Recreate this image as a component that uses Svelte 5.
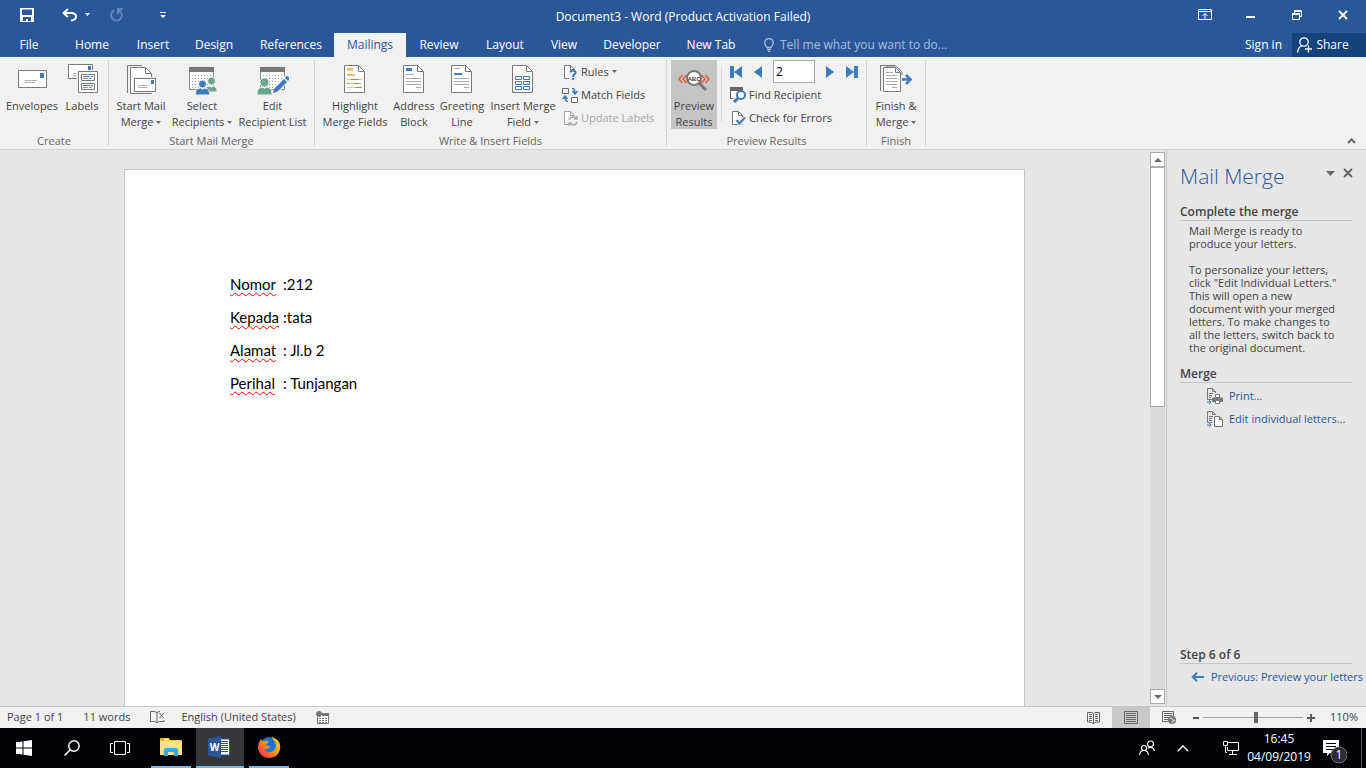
<script>
  const tabs = [
    { name: "File", width: 58 },
    { name: "Home", width: 68 },
    { name: "Insert", width: 54 },
    { name: "Design", width: 68 },
    { name: "References", width: 86 },
    { name: "Mailings", width: 72 },
    { name: "Review", width: 66 },
    { name: "Layout", width: 66 },
    { name: "View", width: 52 },
    { name: "Developer", width: 84 },
    { name: "New Tab", width: 74 },
  ];
  const letter = [
    ["Nomor", ":212"],
    ["Kepada", ":tata"],
    ["Alamat", ": Jl.b 2"],
    ["Perihal", ": Tunjangan"],
  ];
  let active = $state("Mailings");
  let preview = $state(true);
  let record = $state("2");
  let zoom = $state(110);
</script>

{#snippet caret()}
  <svg class="caret" width="5" height="3" viewBox="0 0 5 3"><path d="M0 0h5L2.500 3z" /></svg>
{/snippet}

{#snippet page()}
  <path d="M5.500 1.500h14l6 6v21h-20z" fill="#fff" stroke="#7a7a7a" />
  <path d="M19.500 1.500v6h6" fill="none" stroke="#7a7a7a" />
{/snippet}

{#snippet calendar()}
  <path d="M3.500 4.500h24v21h-24z" fill="#fff" stroke="#8a8a8a" />
  <path d="M3 3h25v5H3z" fill="#777" />
  <path d="M6 11.500h20M6 14.500h20M6 17.500h20M6 20.500h20M6 23.500h20" stroke="#999" stroke-dasharray="1 2" />
{/snippet}

{#snippet smallPage()}
  <path d="M2.500 1.500h6l4 4v9h-10z" fill="#fff" stroke="currentColor" />
  <path d="M8.500 1.500v4h4" fill="none" stroke="currentColor" />
{/snippet}

{#snippet icon(name)}
  <svg class="icon" width="32" height="32" viewBox="0 0 32 32">
    {#if name === "envelope"}
      <path d="M2.500 6.500h28v17h-28z" fill="#fff" stroke="#7a7a7a" />
      <path d="M24 9h4v5h-4z" fill="#3f7abf" />
      <path d="M9 16.500h12M9 18.500h10" stroke="#b0b0b0" />
    {:else if name === "labels"}
      <path d="M2.500.5h24v14h-24z" fill="#fff" stroke="#7a7a7a" />
      <path d="M22 2h3v4h-3z" fill="#3f7abf" />
      <path d="M7 9.500h5M7 11.500h5" stroke="#b0b0b0" />
      <path d="M12 7.500h19.500v21H12z" fill="#fff" stroke="#f0f0f0" stroke-width="3" />
      <path d="M12.500 7.500h19v21h-19z" fill="#fff" stroke="#7a7a7a" />
      <path d="M15.500 10.500h13v6h-13zM15.500 19.500h13v6h-13z" fill="#fff" stroke="#7a7a7a" />
      <path d="M17 12.500h7m1 0h2M17 21.500h7m1 0h2" stroke="#3f7abf" />
      <path d="M17 14.500h5m1 0h3M17 23.500h5m1 0h3" stroke="#999" />
    {:else if name === "start"}
      <path d="M2.500 29V1.500H17" fill="none" stroke="#7a7a7a" />
      <path d="M5.500 29.500v-26h15l6 6v20z" fill="#fff" stroke="#7a7a7a" />
      <path d="M20.500 3.500v6h6" fill="none" stroke="#7a7a7a" />
      <path d="M9.500 14.500h21v13h-21z" fill="#fff" stroke="#f0f0f0" stroke-width="3" />
      <path d="M9.500 14.500h21v13h-21z" fill="#fff" stroke="#7a7a7a" />
      <path d="M26 16h3v4h-3z" fill="#3f7abf" />
      <path d="M13 21.500h10M13 23.500h9" stroke="#b0b0b0" />
    {:else if name === "select"}
      {@render calendar()}
      <path d="M19 28c0-4 1-6 6-6s6 2 6 6z" fill="#6ba58c" stroke="#f0f0f0" />
      <circle cx="25.500" cy="17" r="4" fill="#6ba58c" stroke="#f0f0f0" />
      <path d="M9.500 31c0-5 1-7 7-7s7 2 7 7z" fill="#3f7abf" stroke="#f0f0f0" />
      <circle cx="16.500" cy="20" r="4" fill="#3f7abf" stroke="#f0f0f0" />
      <path d="M15 24l1.500 2 1.500-2zM24 22l1.500 2 1.500-2z" fill="#fff" />
    {:else if name === "edit"}
      {@render calendar()}
      <path d="M0 31c0-5 1-8 7.500-8S15 26 15 31z" fill="#6ba58c" stroke="#f0f0f0" />
      <circle cx="7.500" cy="18.500" r="4.500" fill="#6ba58c" stroke="#f0f0f0" />
      <path d="M6 23l1.500 2L9 23z" fill="#fff" />
      <path d="M19 26L30 14" stroke="#f0f0f0" stroke-width="7" />
      <path d="M16 29l1.500-4.500L27 15l3 3-9.500 9.500zM28 14l1-1.500q1-1 2 0l1 1q1 1 0 2L31 17z" fill="#3f7abf" />
    {:else if name === "highlight"}
      {@render page()}
      <path d="M8 4h6v3H8zM8 10h8v2H8z" fill="#f0c069" />
      <path d="M8 15.500h15M8 19.500h15M8 23.500h15" stroke="#8a8a8a" />
      <path d="M8 15.500h4m7 0h4M10 19.500h5m5 0h3M8 23.500h9" stroke="#f0c069" />
    {:else if name === "address"}
      {@render page()}
      <path d="M8 4h6v3H8z" fill="#3f7abf" />
      <path d="M8 10.500h8M8 14.500h15M8 17.500h15M8 20.500h15M18 23.500h5" stroke="#aaa" />
    {:else if name === "greeting"}
      {@render page()}
      <path d="M8 9h8v2H8z" fill="#3f7abf" />
      <path d="M8 4.500h6M8 14.500h15M8 17.500h15M8 20.500h15M18 23.500h5" stroke="#aaa" />
    {:else if name === "insert"}
      {@render page()}
      <path d="M8.500 12.500h6v3h-6zM16.500 12.500h6v3h-6zM8.500 17.500h6v3h-6zM16.500 17.500h6v3h-6zM8.500 22.500h6v3h-6zM16.500 22.500h6v3h-6z" fill="#fff" stroke="#3f7abf" />
    {:else if name === "preview"}
      <path d="M4.500 11L1 15l3.500 4M8.500 11L5 15l3.500 4M23.500 11l3.500 4-3.500 4M27.500 11l3.500 4-3.500 4" fill="none" stroke="#e2603a" stroke-width="1.500" />
      <circle cx="16" cy="14" r="7" fill="#fff" stroke="#777" stroke-width="2" />
      <path d="M21 19l7 7" stroke="#777" stroke-width="3" />
      <text x="16" y="17" text-anchor="middle" class="abc">ABC</text>
    {:else if name === "finish"}
      <path d="M.5 27V1.500H15" fill="none" stroke="#7a7a7a" />
      <path d="M3.500 27.500v-24h12l5 5v19z" fill="#fff" stroke="#7a7a7a" />
      <path d="M7 3.500V2h9l6 6v3M15.500 3.500v5h5" fill="none" stroke="#7a7a7a" />
      <path d="M6 8.500h7M6 11.500h11M6 14.500h11M6 17.500h11M6 20.500h11M12 23.500h5" stroke="#aaa" />
      <path d="M22 15.500h8M26 11l4.500 4.500L26 20" fill="none" stroke="#3f7abf" stroke-width="2.500" />
    {/if}
  </svg>
{/snippet}

{#snippet small(name)}
  <svg class="small-icon" width="16" height="16" viewBox="0 0 16 16">
    {#if name === "rules"}
      {@render smallPage()}
      <path d="M7 6h9v10H7z" fill="#f0f0f0" />
      <path d="M8.500 8.500c0-3 5.500-2.500 5 .5-.3 1.500-2.500 1.500-2.500 4M11 14v2" fill="none" stroke="#3f7abf" stroke-width="2" />
    {:else if name === "match"}
      <path d="M.5 1.500h6v5h-6zM9.500 10.500h6v5h-6z" fill="#fff" stroke="#6a6a6a" />
      <path d="M10 1.500q3 0 3 5M10.500 4L13 7l2.500-3M6 14.500q-3 0-3-5M.5 12L3 9l2.500 3" fill="none" stroke="#3f7abf" stroke-width="1.500" />
    {:else if name === "update"}
      {@render smallPage()}
      <path d="M6 6h10v10H6z" fill="#f0f0f0" />
      <path d="M7 10q1-3 4-3t4 2m0-3v3h-3M15 12q-1 3-4 3t-4-2m0 3v-3h3" fill="none" stroke="#aaa" stroke-width="1.500" />
    {:else if name === "find"}
      <path d="M.5 1.500h12v10H.5z" fill="#fff" stroke="#6a6a6a" />
      <path d="M0 0h13v4H0z" fill="#666" />
      <path d="M4 14l3.500-3.500" stroke="#f0f0f0" stroke-width="5" />
      <circle cx="11" cy="8" r="4" fill="#fff" stroke="#3f7abf" stroke-width="2" />
      <path d="M4 15l4-4" stroke="#3f7abf" stroke-width="3" />
    {:else if name === "check"}
      {@render smallPage()}
      <path d="M7 11l3 3 5.500-7" fill="none" stroke="#f0f0f0" stroke-width="4" />
      <path d="M6.500 10l3 3.500L15 7.500" fill="none" stroke="#3f7abf" stroke-width="2" />
    {:else if name === "print"}
      <path d="M5 11.500H.5V.5h5l3 3V5M5.500.5v3h3M2 5.500h4M2 7.500h3M2 9.500h2" fill="none" stroke="#777" />
      <path d="M0 14h4M2 12l2 2-2 2" fill="none" stroke="#3f7abf" />
      <path d="M5.500 10h10v3.500h-10z" fill="#777" stroke="#777" />
      <path d="M8.500 6.500h4v3h-4zM8.500 12.500h4v3h-4z" fill="#fff" stroke="#777" />
    {:else if name === "letters"}
      <path d="M5 11.500H.5V.5h5l3 3V4M5.500.5v3h3M2 5.500h4M2 7.500h3M2 9.500h3" fill="none" stroke="#777" />
      <path d="M0 14h4M2 12l2 2-2 2" fill="none" stroke="#3f7abf" />
      <path d="M7.500 5.500h5l3 3v7h-8zM12.500 5.500v3h3" fill="#fff" stroke="#777" />
    {/if}
  </svg>
{/snippet}

{#snippet big(name, first, second, size, drop)}
  <button class="big {size}">
    {@render icon(name)}
    <span>{first}</span>
    {#if second}<span>{second}{#if drop}{@render caret()}{/if}</span>{/if}
  </button>
{/snippet}

<div class="window">
  <header>
    <div class="titlebar">
      <div class="quick">
        <button aria-label="Save">
          <svg width="14" height="14" viewBox="0 0 14 14"><path d="M0 0h14v14H0zM2 1.500V7h10V1.500zM3 9v4h3v-2h2v2h3V9z" fill="#fff" fill-rule="evenodd" /></svg>
        </button>
        <button aria-label="Undo" class="undo">
          <svg width="28" height="14" viewBox="0 0 28 14"><path d="M6 1L1.500 5 6 9M2 5h7q5 0 5 3.500T9 12.500" fill="none" stroke="#fff" stroke-width="2" /><path d="M23 5h5l-2.500 3z" fill="#fff" /></svg>
        </button>
        <button aria-label="Repeat" class="repeat">
          <svg width="14" height="14" viewBox="0 0 14 14"><path d="M4 2.500a5.300 5.300 0 1 0 5 0M8 6V1h5" fill="none" stroke="#6083bb" stroke-width="2" /></svg>
        </button>
        <button aria-label="Customize Quick Access Toolbar">
          <svg width="6" height="6" viewBox="0 0 6 6"><path d="M0 0h6v1H0zM0 3h6L3 6z" fill="#fff" /></svg>
        </button>
      </div>
      <div class="title">Document3 - Word (Product Activation Failed)</div>
      <div class="controls">
        <button aria-label="Ribbon Display Options">
          <svg width="14" height="11" viewBox="0 0 14 11"><path d="M.5.5h13v10H.5zM1 2.500h12M7 10V4.500M4.500 7L7 4.500 9.500 7" fill="none" stroke="#fff" /></svg>
        </button>
        <button aria-label="Minimize">
          <svg width="10" height="10" viewBox="0 0 10 10"><path d="M0 6h9v2H0z" fill="#fff" /></svg>
        </button>
        <button aria-label="Restore">
          <svg width="10" height="10" viewBox="0 0 10 10"><path d="M.5 4h7v5.500h-7zM2.500 3V1h7v5.500H8" fill="none" stroke="#fff" /><path d="M2 0h8v2H2zM0 3h8v2H0z" fill="#fff" /></svg>
        </button>
        <button aria-label="Close">
          <svg width="10" height="10" viewBox="0 0 10 10"><path d="M1 1l8 8M9 1L1 9" stroke="#fff" stroke-width="2" /></svg>
        </button>
      </div>
    </div>
    <nav>
      {#each tabs as tab}
        <button class="tab" class:active={active === tab.name} style="width:{tab.width}px" onclick={() => (active = tab.name)}>{tab.name}</button>
      {/each}
      <label class="tell">
        <svg width="10" height="14" viewBox="0 0 10 14"><path d="M3 9.500Q.7 7 .7 4.800a4.300 4.300 0 0 1 8.600 0Q9.300 7 7 9.500zM3 11.500h4M4 13.300h2" fill="none" stroke="#a9bddc" stroke-width="1.300" /></svg>
        <input placeholder="Tell me what you want to do..." />
      </label>
      <button class="signin">Sign in</button>
      <button class="share">
        <svg width="15" height="16" viewBox="0 0 15 16"><circle cx="7" cy="5" r="4.200" fill="none" stroke="#fff" stroke-width="1.300" /><path d="M.7 15.500q0-5 4-6.500M8 12h7M11.500 8.500v7" fill="none" stroke="#fff" stroke-width="1.300" /></svg>
        Share
      </button>
    </nav>
  </header>

  <div class="ribbon">
    <section class="group">
      <div class="tools">
        {@render big("envelope", "Envelopes", "", "w56")}
        {@render big("labels", "Labels", "", "w44")}
      </div>
      <h2>Create</h2>
    </section>
    <section class="group">
      <div class="tools">
        {@render big("start", "Start Mail", "Merge", "w56", true)}
        {@render big("select", "Select", "Recipients", "w66", true)}
        {@render big("edit", "Edit", "Recipient List", "w75")}
      </div>
      <h2>Start Mail Merge</h2>
    </section>
    <section class="group">
      <div class="tools">
        {@render big("highlight", "Highlight", "Merge Fields", "w72")}
        {@render big("address", "Address", "Block", "w46")}
        {@render big("greeting", "Greeting", "Line", "w50")}
        {@render big("insert", "Insert Merge", "Field", "w72", true)}
        <div class="column fields">
          <button class="row">{@render small("rules")}Rules{@render caret()}</button>
          <button class="row">{@render small("match")}Match Fields</button>
          <button class="row" disabled>{@render small("update")}Update Labels</button>
        </div>
      </div>
      <h2>Write &amp; Insert Fields</h2>
    </section>
    <section class="group">
      <div class="tools">
        <button class="big w46" class:pressed={preview} onclick={() => (preview = !preview)}>
          {@render icon("preview")}
          <span>Preview</span>
          <span>Results</span>
        </button>
        <div class="column records">
          <div class="record">
            <button aria-label="First Record"><svg width="13" height="12" viewBox="0 0 13 12"><path d="M0 0h4v12H0zM12 0v12L4 6z" /></svg></button>
            <button aria-label="Previous Record"><svg width="8" height="12" viewBox="0 0 8 12"><path d="M8 0v12L0 6z" /></svg></button>
            <input aria-label="Go to Record" bind:value={record} />
            <button aria-label="Next Record"><svg width="8" height="12" viewBox="0 0 8 12"><path d="M0 0v12l8-6z" /></svg></button>
            <button aria-label="Last Record"><svg width="13" height="12" viewBox="0 0 13 12"><path d="M9 0h4v12H9zM1 0v12l8-6z" /></svg></button>
          </div>
          <button class="row">{@render small("find")}Find Recipient</button>
          <button class="row">{@render small("check")}Check for Errors</button>
        </div>
      </div>
      <h2>Preview Results</h2>
    </section>
    <section class="group">
      <div class="tools">
        {@render big("finish", "Finish &", "Merge", "w50", true)}
      </div>
      <h2>Finish</h2>
    </section>
    <button class="collapse" aria-label="Collapse the Ribbon">
      <svg width="9" height="6" viewBox="0 0 9 6"><path d="M1 5l3.500-3.500L8 5" fill="none" stroke="#666" stroke-width="2" /></svg>
    </button>
  </div>

  <main>
    <div class="canvas">
      <article>
        {#each letter as [word, value]}
          <p><span class="key"><span class="misspelt">{word}</span></span>{value}</p>
        {/each}
      </article>
    </div>
    <div class="scroll">
      <button aria-label="Scroll up"><svg width="8" height="4" viewBox="0 0 8 4"><path d="M0 4h8L4 0z" fill="#666" /></svg></button>
      <div class="track"><div class="thumb"></div></div>
      <button aria-label="Scroll down"><svg width="8" height="4" viewBox="0 0 8 4"><path d="M0 0h8L4 4z" fill="#666" /></svg></button>
    </div>
    <aside>
      <div class="pane-head">
        <h1>Mail Merge</h1>
        <button aria-label="Task Pane Options"><svg width="9" height="5" viewBox="0 0 9 5"><path d="M0 0h9L4.500 5z" fill="#666" /></svg></button>
        <button aria-label="Close pane"><svg width="10" height="10" viewBox="0 0 10 10"><path d="M1 1l8 8M9 1L1 9" stroke="#666" stroke-width="2" /></svg></button>
      </div>
      <h3>Complete the merge</h3>
      <p>Mail Merge is ready to produce your letters.</p>
      <p>To personalize your letters, click "Edit Individual Letters." This will open a new document with your merged letters. To make changes to all the letters, switch back to the original document.</p>
      <h3>Merge</h3>
      <a class="action" href="#print">{@render small("print")}Print...</a>
      <a class="action" href="#letters">{@render small("letters")}Edit individual letters...</a>
      <h3 class="step">Step 6 of 6</h3>
      <a class="previous" href="#previous">
        <svg width="13" height="10" viewBox="0 0 13 10"><path d="M13 5H2M6 .7L1.700 5 6 9.300" fill="none" stroke="#3f7abf" stroke-width="2" /></svg>
        Previous: Preview your letters
      </a>
    </aside>
  </main>

  <footer class="status">
    <span>Page 1 of 1</span>
    <span class="words">11 words</span>
    <svg class="proof" width="15" height="13" viewBox="0 0 15 13"><path d="M7 11.500Q5 10 .5 10.500v-10Q5 0 7 1.500zm0 0Q9 10 14 10.500V9M7 1.500Q9 .5 10 .5M9.500 2l4 5M13.500 2l-4 5" fill="none" stroke="#666" /></svg>
    <span class="language">English (United States)</span>
    <svg class="macro" width="13" height="13" viewBox="0 0 13 13"><path d="M1.500 6v6.500h11v-10H7" fill="#fff" stroke="#777" /><path d="M6 2h7v3H6z" fill="#777" /><circle cx="3" cy="3" r="3" fill="#777" /><path d="M3 7.500h8M3 9.500h8M3 11.500h8" stroke="#777" stroke-dasharray="2 1" /></svg>
    <div class="views">
      <button aria-label="Read Mode"><svg width="13" height="12" viewBox="0 0 13 12"><path d="M6.500 11.500Q4 9.500.5 10V.5H5l1.500 1L8 .5h4.500V10Q9 9.500 6.500 11.500zm0 0v-10M2 2.500h3M2 4.500h3M2 6.500h3M2 8.500h3M8 2.500h3M8 4.500h3M8 6.500h3M8 8.500h3" fill="none" stroke="#666" /></svg></button>
      <button aria-label="Print Layout" class="current"><svg width="14" height="13" viewBox="0 0 14 13"><path d="M.5.5h13v12H.5zM2 2.500h10M2 4.500h10M2 6.500h10M2 8.500h10M2 10.500h10" fill="none" stroke="#666" /></svg></button>
      <button aria-label="Web Layout"><svg width="14" height="13" viewBox="0 0 14 13"><path d="M6 10.500H.5V.5h11V5M2 2.500h8M2 4.500h8M2 6.500h5M2 8.500h4" fill="none" stroke="#666" /><circle cx="10" cy="9" r="4" fill="#777" /><path d="M8 7q3 0 3 2.500M10 12q0-2 3-3" fill="none" stroke="#eee" /></svg></button>
    </div>
    <button aria-label="Zoom out"><svg width="6" height="8" viewBox="0 0 6 8"><path d="M0 3h6v2H0z" fill="#555" /></svg></button>
    <input type="range" min="10" max="200" aria-label="Zoom" bind:value={zoom} />
    <button aria-label="Zoom in"><svg width="8" height="8" viewBox="0 0 8 8"><path d="M0 3h8v2H0zM3 0h2v8H3z" fill="#555" /></svg></button>
    <span class="percent">{zoom}%</span>
  </footer>

  <div class="taskbar">
    <button aria-label="Start"><svg width="16" height="16" viewBox="0 0 16 16"><path d="M0 2.300L6.500 1.400v6.100H0zM7.500 1.200L16 0v7.500H7.500zM0 8.500h6.500v6.100L0 13.700zM7.500 8.500H16V16l-8.500-1.200z" fill="#fff" /></svg></button>
    <button aria-label="Search"><svg width="16" height="16" viewBox="0 0 16 16"><circle cx="10" cy="6" r="5.200" fill="none" stroke="#fff" stroke-width="1.400" /><path d="M6.300 9.700L.5 15.500" stroke="#fff" stroke-width="1.500" /></svg></button>
    <button aria-label="Task View"><svg width="20" height="14" viewBox="0 0 20 14"><path d="M4.500.5h11v13h-11zM3 2.500H.5v9H3M17 2.500h2.500v9H17" fill="none" stroke="#fff" /></svg></button>
    <button aria-label="File Explorer" class="open">
      <svg width="22" height="20" viewBox="0 0 22 20"><path d="M0 2q0-1 1-1h8l1 2h11q1 0 1 1v14H0z" fill="#f6c64f" /><path d="M0 4h22v14H0z" fill="#fde08a" /><path d="M4 19v-6q0-2 2-2h10q2 0 2 2v6h-4v-4H8v4z" fill="#36a9e1" /><path d="M2 2h2v1H2z" fill="#36a9e1" /><path d="M4 2h4v1H4z" fill="#fff" /></svg>
    </button>
    <button aria-label="Word" class="open word">
      <svg width="24" height="22" viewBox="0 0 24 22"><path d="M12 3h9.500v16H12z" fill="#fff" stroke="#2b579a" /><path d="M13 5.500h7M13 7.500h7M13 9.500h7M13 11.500h7M13 13.500h7M13 15.500h7" stroke="#2b579a" /><path d="M0 2.500L13 0v22L0 19.500z" fill="#2b579a" /><text x="6.500" y="15" text-anchor="middle" class="w">W</text></svg>
    </button>
    <button aria-label="Firefox" class="open">
      <svg width="24" height="24" viewBox="0 0 24 24">
        <defs><linearGradient id="fox" x1="1" y1="0" x2="0" y2="1"><stop offset="0" stop-color="#ffe226" /><stop offset=".5" stop-color="#ff9315" /><stop offset="1" stop-color="#f1185b" /></linearGradient></defs>
        <circle cx="12" cy="11" r="9" fill="#1475d5" />
        <path d="M4 4q-4 5-2.600 11Q4 23 12 23t10.500-7Q25 8 19 4q-3-1-4-3 0 3 3 6 2 4 0 7t-6 3q-4 0-5-3 2 1 4-.5 3-1 1-2.500-2 0-3-1 0-2 3-3-2-2-4-1L5 6z" fill="url(#fox)" />
      </svg>
    </button>
    <div class="tray">
      <button aria-label="People"><svg width="16" height="16" viewBox="0 0 16 16"><circle cx="11.500" cy="4" r="3" fill="none" stroke="#fff" stroke-width="1.200" /><circle cx="5" cy="8" r="2.500" fill="none" stroke="#fff" stroke-width="1.200" /><path d="M.7 15q0-4.500 4.300-4.500T9.300 15M8.500 8Q15 6 15.300 11" fill="none" stroke="#fff" stroke-width="1.200" /></svg></button>
      <button aria-label="Show hidden icons"><svg width="12" height="7" viewBox="0 0 12 7"><path d="M.7 6.300L6 1l5.300 5.300" fill="none" stroke="#fff" stroke-width="1.300" /></svg></button>
      <button aria-label="Network" class="network"><svg width="16" height="14" viewBox="0 0 16 14"><path d="M5 1.500h10.500v8H4.500V6M9.500 10v3M6 13.500h8" fill="none" stroke="#fff" /><path d="M.5.500h4v4h-4zM2.500 5v6.500H4" fill="#000" stroke="#fff" /></svg></button>
      <time><span>16:45</span><span>04/09/2019</span></time>
      <button aria-label="Notifications" class="notes">
        <svg width="24" height="26" viewBox="0 0 24 26"><path d="M0 2h16v13H7l-3 3v-3H0z" fill="#fff" /><path d="M3 5.500h10M3 8.500h10M3 11.500h7" stroke="#000" /><circle cx="16" cy="17" r="8" fill="#2c2d30" stroke="#777" /><text x="16" y="21" text-anchor="middle" class="count">1</text></svg>
      </button>
    </div>
  </div>
</div>

<style>
  :global(body) {
    margin: 0;
    overflow: hidden;
  }

  .window {
    height: 100vh;
    display: flex;
    flex-direction: column;
    font: 12px/16px "Open Sans", sans-serif;
    color: #444;
    background: #e6e6e6;
  }

  button {
    font: inherit;
    color: inherit;
    background: none;
    border: 0;
    padding: 0;
    margin: 0;
    display: flex;
    align-items: center;
    justify-content: center;
    white-space: nowrap;
  }
  svg {
    display: block;
    flex-shrink: 0;
  }
  a {
    text-decoration: none;
    color: #2b579a;
  }
  h1,
  h2,
  h3,
  p {
    margin: 0;
    font-weight: normal;
  }

  header {
    background: #2b579a;
    color: #fff;
  }
  .titlebar {
    height: 33px;
    display: grid;
    grid-template-columns: 1fr auto 1fr;
    align-items: center;
  }
  .quick {
    display: flex;
    align-items: center;
    padding: 0 0 4px 20px;
  }
  .undo {
    margin-left: 28px;
  }
  .repeat {
    margin: 0 36px 0 20px;
  }
  .controls {
    display: flex;
    justify-content: flex-end;
    padding-bottom: 4px;
  }
  .controls button {
    width: 46px;
  }

  nav {
    display: flex;
    height: 24px;
  }
  .tab.active {
    background: #f1f1f1;
    color: #2b579a;
  }
  .tell {
    display: flex;
    align-items: center;
    gap: 6px;
    flex: 1;
    padding-left: 16px;
  }
  .tell input {
    width: 200px;
    padding: 0;
    border: 0;
    background: none;
    font: inherit;
    color: #fff;
  }
  .tell input::placeholder {
    color: #a9bddc;
    opacity: 1;
  }
  .signin {
    padding: 0 10px;
  }
  .share {
    width: 74px;
    gap: 4px;
    padding-right: 12px;
    box-sizing: border-box;
    background: #15427c;
  }

  .ribbon {
    display: flex;
    height: 92px;
    background: #f1f1f1;
    border-bottom: 1px solid #d2d2d2;
    flex-shrink: 0;
    font-size: 11px;
  }
  .group {
    display: flex;
    flex-direction: column;
    padding: 3px 4px 0;
    border-right: 1px solid;
    border-image: linear-gradient(transparent 4px, #d4d4d4 4px, #d4d4d4 88px, transparent 88px) 1;
  }
  .tools {
    display: flex;
    height: 72px;
    flex-shrink: 0;
  }
  h2 {
    font-size: 11px;
    line-height: 17px;
    text-align: center;
    color: #666;
  }
  .big {
    flex-direction: column;
    justify-content: flex-start;
    height: 69px;
  }
  .icon {
    margin: 4px 0 2px;
  }
  .big span {
    display: flex;
    align-items: center;
  }
  .w44 {
    width: 44px;
  }
  .w46 {
    width: 46px;
  }
  .w50 {
    width: 50px;
  }
  .w56 {
    width: 56px;
  }
  .w66 {
    width: 66px;
  }
  .w72 {
    width: 72px;
  }
  .w75 {
    width: 75px;
  }
  .pressed {
    background: #c5c5c5;
  }
  .caret {
    margin-left: 3px;
    fill: #666;
  }
  .abc {
    font: bold 6px "Liberation Sans", sans-serif;
    fill: #444;
  }
  .column {
    display: flex;
    flex-direction: column;
  }
  .fields {
    width: 100px;
    padding-left: 3px;
  }
  .records {
    width: 132px;
    margin-left: 4px;
    padding-left: 9px;
    background: linear-gradient(#d9d9d9, #d9d9d9) left 7px / 1px 55px no-repeat;
  }
  .row {
    height: 23px;
    justify-content: flex-start;
    color: #444;
  }
  .small-icon {
    margin-right: 3px;
    color: #777;
  }
  .row:disabled,
  .row:disabled .small-icon {
    color: #a6a6a6;
  }
  .record {
    display: flex;
    align-items: center;
    height: 23px;
    gap: 11px;
    fill: #3f7abf;
  }
  .record input {
    width: 42px;
    height: 23px;
    box-sizing: border-box;
    border: 1px solid #ababab;
    padding: 0 2px;
    font: inherit;
    font-size: 12px;
    color: #000;
  }
  .collapse {
    margin-left: auto;
    padding: 0 10px 5px;
    align-items: flex-end;
  }

  main {
    flex: 1;
    min-height: 0;
    display: flex;
  }
  .canvas {
    flex: 1;
    padding: 19px 125px 0 124px;
    display: flex;
    overflow: hidden;
  }
  article {
    flex: 1;
    border: 1px solid #c6c6c6;
    border-bottom: 0;
    background: #fff;
    padding: 98px 105px 0;
    font: 15px/33px Lato, sans-serif;
    color: #000;
  }
  .key {
    display: inline-block;
    width: 53px;
  }
  .misspelt {
    text-decoration: underline wavy #f00 1px;
    text-underline-offset: 2px;
    text-decoration-skip-ink: none;
  }

  .scroll {
    width: 15px;
    padding: 2px 1px 2px 0;
    display: flex;
    flex-direction: column;
  }
  .scroll button {
    height: 15px;
    background: #fff;
    border: 1px solid #ababab;
  }
  .track {
    flex: 1;
    background: #dadada;
  }
  .thumb {
    height: 46%;
    box-sizing: border-box;
    background: #fff;
    border: 1px solid #ababab;
  }

  aside {
    width: 200px;
    box-sizing: border-box;
    border-left: 1px solid #c6c6c6;
    padding: 12px 8px 16px 13px;
    display: flex;
    flex-direction: column;
    font-size: 11px;
  }
  .pane-head {
    display: flex;
    gap: 8px;
    height: 30px;
    margin: 0 5px 12px 0;
  }
  .pane-head button {
    height: 22px;
  }
  h1 {
    flex: 1;
    font: 300 21px/28px "Open Sans", sans-serif;
    white-space: nowrap;
    color: #2b579a;
  }
  h3 {
    font-size: 12px;
    font-weight: 600;
    margin-right: 6px;
    border-bottom: 1px solid #c6c6c6;
  }
  aside p {
    margin: 3px 20px 10px 9px;
    line-height: 13px;
  }
  p + h3 {
    margin-top: 2px;
  }
  .action {
    display: flex;
    align-items: center;
    height: 23px;
    margin-left: 27px;
    white-space: nowrap;
  }
  .action .small-icon {
    margin-right: 6px;
  }
  h3 + .action {
    margin-top: 1px;
  }
  .step {
    margin-top: auto;
  }
  .previous {
    display: flex;
    align-items: center;
    gap: 7px;
    height: 26px;
    padding-left: 11px;
    white-space: nowrap;
  }

  .status {
    display: flex;
    align-items: center;
    height: 21px;
    flex-shrink: 0;
    border-top: 1px solid #c6c6c6;
    background: #f1f1f1;
    padding: 0 8px 0 7px;
    font-size: 11px;
  }
  .status span {
    padding-bottom: 2px;
  }
  .words,
  .proof,
  .macro {
    margin-left: 20px;
  }
  .language {
    margin-left: 16px;
  }
  .views {
    margin-left: auto;
    margin-right: 5px;
    display: flex;
    height: 21px;
  }
  .views button {
    width: 38px;
  }
  .views .current {
    background: #c8c8c8;
  }
  .status input {
    appearance: none;
    width: 100px;
    height: 12px;
    margin: 0 4px;
    background: linear-gradient(#a6a6a6, #a6a6a6) center / 100% 1px no-repeat;
  }
  .status input::-webkit-slider-thumb {
    appearance: none;
    width: 4px;
    height: 11px;
    background: #666;
  }
  .percent {
    margin-left: 15px;
  }

  .taskbar {
    display: flex;
    height: 40px;
    flex-shrink: 0;
    background: #010307;
    color: #fff;
  }
  .taskbar button {
    width: 48px;
  }
  .taskbar .open {
    width: 40px;
    margin: 0 5px 0 7px;
    border-bottom: 2px solid #76b9ed;
  }
  .taskbar .word {
    width: 48px;
    margin: 0;
    background: #35373b;
  }
  .taskbar .word + .open {
    margin-left: 5px;
  }
  .w {
    font: bold 10px "Open Sans", sans-serif;
    fill: #fff;
  }
  .count {
    font: 12px "Open Sans", sans-serif;
    fill: #fff;
  }
  .tray {
    margin-left: auto;
    display: flex;
    border-right: 1px solid #555;
    margin-right: 4px;
  }
  .tray button {
    width: 36px;
  }
  .tray .network {
    margin-left: 12px;
  }
  time {
    display: flex;
    flex-direction: column;
    justify-content: center;
    align-items: center;
    line-height: 18px;
    width: 60px;
  }
  .tray .notes {
    width: 52px;
    padding-top: 6px;
  }
</style>
